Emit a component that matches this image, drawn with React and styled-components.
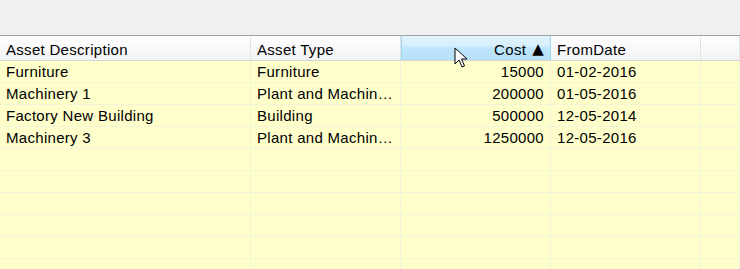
import React from 'react';
import styled, { createGlobalStyle } from 'styled-components';

const GlobalStyle = createGlobalStyle`
  html, body {
    margin: 0;
    padding: 0;
    background: #f0f0f0;
    overflow: hidden;
  }
  body {
    font-family: "Liberation Sans", Arial, sans-serif;
  }
`;

const columns = [
  { key: 'desc', title: 'Asset Description', width: 251 },
  { key: 'type', title: 'Asset Type', width: 150 },
  { key: 'cost', title: 'Cost', width: 150, right: true, sorted: true },
  { key: 'from', title: 'FromDate', width: 150 },
  { key: 'pad', title: '', width: 39 },
];

const rows = [
  { desc: 'Furniture', type: 'Furniture', cost: '15000', from: '01-02-2016' },
  { desc: 'Machinery 1', type: 'Plant and Machinery', cost: '200000', from: '01-05-2016' },
  { desc: 'Factory New Building', type: 'Building', cost: '500000', from: '12-05-2014' },
  { desc: 'Machinery 3', type: 'Plant and Machinery', cost: '1250000', from: '12-05-2016' },
];

const Window = styled.div`
  width: 740px;
  height: 269px;
  display: flex;
  flex-direction: column;
  overflow: hidden;
`;

const Toolbar = styled.div`
  height: 35px;
  flex: none;
  background: #f0f0f0;
`;

const Grid = styled.div`
  flex: 1;
  border-top: 1px solid #a0a0a0;
  background: #ffffcc;
  position: relative;
  overflow: hidden;
`;

const HeaderRow = styled.div`
  display: flex;
  height: 24px;
  background: linear-gradient(#ffffff, #f2f3f5);
  border-bottom: 1px solid #d5d5d5;
`;

const HeaderCell = styled.div`
  flex: none;
  width: ${p => p.$w}px;
  box-sizing: border-box;
  padding: 2px 6px 0 6px;
  display: flex;
  align-items: center;
  justify-content: ${p => (p.$right ? 'flex-end' : 'flex-start')};
  font-size: 15px;
  letter-spacing: 0.3px;
  color: #000;
  white-space: nowrap;
  border-right: 1px solid #e2e3e5;
  background: ${p => (p.$sorted ? 'linear-gradient(#e3f4fc 0%, #d6effc 40%, #bfe5fb 50%, #b5e1fb 100%)' : 'transparent')};
  ${p => p.$sorted && 'border-left: 1px solid #96d9f9; border-right: 1px solid #96d9f9;'}
`;

const SortArrow = styled.span`
  font-family: "DejaVu Sans", sans-serif;
  font-size: 15px;
  margin-left: 6px;
`;

const Row = styled.div`
  display: flex;
  height: 22px;
  box-sizing: border-box;
  border-bottom: 1px solid #f4f4d8;
`;

const Cell = styled.div`
  flex: none;
  width: ${p => p.$w}px;
  box-sizing: border-box;
  padding: 0 6px;
  display: flex;
  align-items: center;
  justify-content: ${p => (p.$right ? 'flex-end' : 'flex-start')};
  font-size: 15px;
  letter-spacing: 0.3px;
  color: #000;
  white-space: nowrap;
  overflow: hidden;
  border-right: 1px solid #f4f4d8;
`;

const Ellipsis = styled.span`
  overflow: hidden;
  text-overflow: ellipsis;
`;

const Pointer = styled.svg`
  position: absolute;
  left: 454px;
  top: 11px;
  pointer-events: none;
`;

export default function App() {
  const filler = Array.from({ length: 6 });
  return (
    <>
      <GlobalStyle />
      <Window>
        <Toolbar />
        <Grid>
          <HeaderRow>
            {columns.map(c => (
              <HeaderCell key={c.key} $w={c.width} $right={c.right} $sorted={c.sorted}>
                {c.title}
                {c.sorted && <SortArrow>▲</SortArrow>}
              </HeaderCell>
            ))}
          </HeaderRow>
          {rows.map((r, i) => (
            <Row key={i}>
              {columns.map(c => (
                <Cell key={c.key} $w={c.width} $right={c.right}>
                  <Ellipsis>{r[c.key] || ''}</Ellipsis>
                </Cell>
              ))}
            </Row>
          ))}
          {filler.map((_, i) => (
            <Row key={'f' + i}>
              {columns.map(c => (
                <Cell key={c.key} $w={c.width} />
              ))}
            </Row>
          ))}
          <Pointer width="14" height="22" viewBox="0 0 14 22">
            <path
              d="M1 1 L1 17 L5 13 L8 20 L10.5 19 L7.5 12 L13 12 Z"
              fill="#fff"
              stroke="#000"
              strokeWidth="1"
              strokeLinejoin="miter"
            />
          </Pointer>
        </Grid>
      </Window>
    </>
  );
}
